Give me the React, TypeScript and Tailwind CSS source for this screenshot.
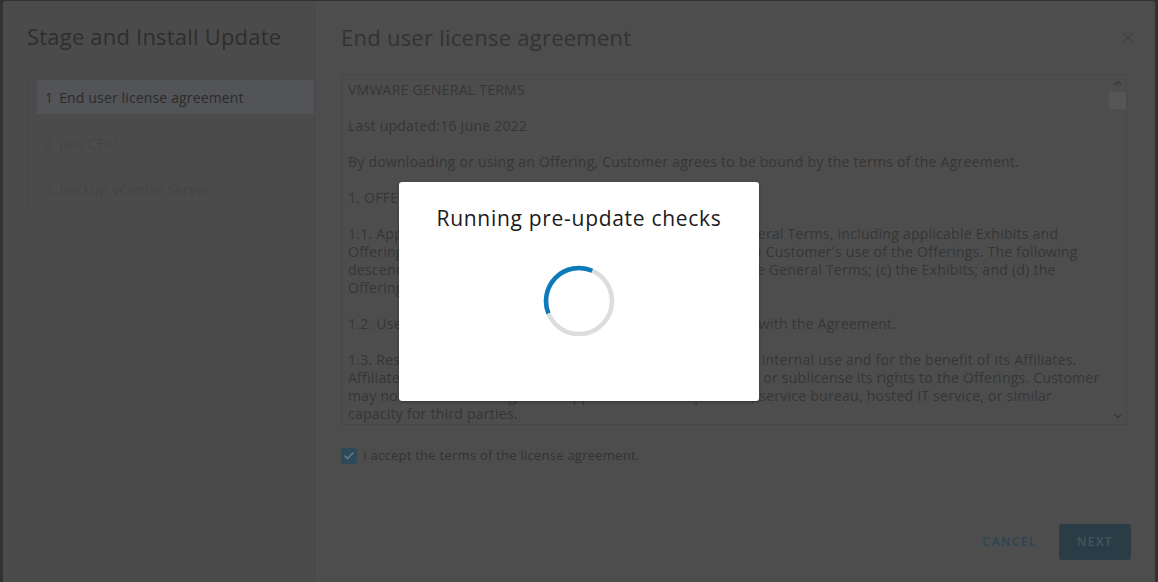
import { Check, ChevronDown, ChevronUp, X } from "lucide-react";

const font = { fontFamily: '"Open Sans", "Liberation Sans", sans-serif' };

const terms: string[][] = [
  ["VMWARE GENERAL TERMS"],
  ["Last updated:16 June 2022"],
  ["By downloading or using an Offering, Customer agrees to be bound by the terms of the Agreement."],
  ["1. OFFERINGS."],
  [
    "1.1. Applicable Terms. The terms of the Order and these General Terms, including applicable Exhibits and",
    "Offering-specific Notes (collectively, the \u201cAgreement\u201d), govern Customer's use of the Offerings. The following",
    "descending order of precedence applies: (a) the Order; (b) the General Terms; (c) the Exhibits; and (d) the",
    "Offering-specific Notes.",
  ],
  ["1.2. Users. Customer is responsible for its Users\u2019 compliance with the Agreement."],
  [
    "1.3. Restrictions. Customer may use the Offerings only for its internal use and for the benefit of its Affiliates.",
    "Affiliates may not use the Offerings. Customer may not resell or sublicense its rights to the Offerings. Customer",
    "may not use the Offerings in an application service provider, service bureau, hosted IT service, or similar",
    "capacity for third parties.",
  ],
];

const steps = ["End user license agreement", "Join CEIP", "Backup vCenter Server"];

export default function App() {
  return (
    <div className="relative h-[582px] w-full overflow-hidden bg-[#323232] px-[3px] pt-px" style={font}>
      {/* Wizard (dimmed behind backdrop) */}
      <div className="flex h-[600px] overflow-hidden rounded-t-[3px] bg-[#4d4d4d]">
        <aside className="flex w-[312px] shrink-0 flex-col border-r border-[#474747] bg-[#4b4b4b] pl-6">
          <h1 className="mt-[20px] text-[22px] leading-[30px] tracking-[0.2px] text-[#2e2e2e]">
            Stage and Install Update
          </h1>
          <nav className="mt-[22px] flex flex-col gap-3 border-l border-[#484848] py-[7px] pl-[9px]">
            {steps.map((s, i) => (
              <div
                key={s}
                className={`flex h-[34px] items-center gap-1.5 pl-[8px] text-[14px] tracking-[0.15px] ${
                  i === 0 ? "bg-[#535457] text-[#2b2b2b]" : "text-[#454545]"
                }`}
              >
                <span>{i + 1}</span>
                <span>{s}</span>
              </div>
            ))}
          </nav>
        </aside>

        <section className="flex flex-1 flex-col pl-[26px] pr-[28px]">
          <div className="mt-[21px] flex items-center justify-between">
            <h2 className="text-[22px] leading-[30px] tracking-[0.25px] text-[#333333]">
              End user license agreement
            </h2>
            <X className="-mr-[10px] mt-[2px] h-[18px] w-[18px] text-[#3b3b3b]" strokeWidth={1.3} />
          </div>

          <div className="mt-[22px] flex h-[351px] border border-[#474747]">
            <div className="min-w-0 flex-1 overflow-hidden pl-[6px] pt-[6px] text-[14px] leading-[18px] tracking-[0.25px] text-[#363636]">
              {terms.map((p, i) => (
                <p key={i} className="mb-[18px] whitespace-nowrap">
                  {p.map((l, j) => (
                    <span key={j} className="block">
                      {l}
                    </span>
                  ))}
                </p>
              ))}
            </div>
            <div className="flex w-[17px] shrink-0 flex-col items-center">
              <ChevronUp className="mt-[2px] h-[12px] w-[12px] text-[#3a3a3a]" strokeWidth={3} />
              <svg className="mt-[3px]" width="17" height="17" aria-hidden>
                <rect width="17" height="17" fill="#565656" />
              </svg>
              <span className="flex-1" />
              <ChevronDown className="mb-[2px] h-[12px] w-[12px] text-[#3a3a3a]" strokeWidth={3} />
            </div>
          </div>

          <div className="mt-[21px] flex items-center gap-[6px] text-[13px] tracking-[0.25px] text-[#333333]">
            <span className="flex h-[16px] w-[16px] items-center justify-center rounded-[3px] bg-[#2d4a5b]">
              <Check className="h-[12px] w-[12px] text-[#6d7b83]" strokeWidth={3} />
            </span>
            <span>I accept the terms of the license agreement.</span>
          </div>

          <div className="mt-[58px] flex items-center justify-end gap-[10px]">
            <button className="h-[36px] px-[12px] text-[12px] font-semibold tracking-[0.12em] text-[#2a4654]">
              CANCEL
            </button>
            <button className="-mr-[4px] h-[36px] w-[72px] rounded-[3px] bg-[#2a3d47] text-[12px] font-semibold tracking-[0.12em] text-[#45555d]">
              NEXT
            </button>
          </div>
        </section>
      </div>

      {/* Progress dialog */}
      <div className="absolute left-[399px] top-[182px] flex h-[219px] w-[360px] flex-col items-center rounded-[3px] bg-white shadow-[0_1px_3px_rgba(0,0,0,0.35)]">
        <h3 className="mt-[23px] text-[21px] leading-[26px] tracking-[0.7px] text-[#1b1b1b]">
          Running pre-update checks
        </h3>
        <svg className="mt-[34px]" width="72" height="72" viewBox="0 0 72 72" aria-hidden>
          <circle cx="36" cy="36" r="33" fill="none" stroke="#dddddd" strokeWidth="4.5" />
          <path d="M5.43 48.41 A33 33 0 0 1 49.21 5.76" fill="none" stroke="#0b7bbb" strokeWidth="4.5" />
        </svg>
      </div>
    </div>
  );
}
